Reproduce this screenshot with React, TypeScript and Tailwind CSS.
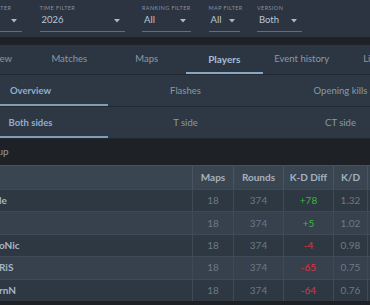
import React from 'react'

type Filter = { label: string; value: string; width: string }

const FILTERS: Filter[] = [
  { label: 'EVENT FILTER', value: 'All', width: 'w-[51px]' },
  { label: 'TIME FILTER', value: '2026', width: 'w-[85px]' },
  { label: 'RANKING FILTER', value: 'All', width: 'w-[49px]' },
  { label: 'MAP FILTER', value: 'All', width: 'w-[31px]' },
  { label: 'VERSION', value: 'Both', width: 'w-[45px]' },
]

const TABS = ['Overview', 'Matches', 'Maps', 'Players', 'Event history', 'Lineups']

const ROWS = [
  { name: 'le', maps: 18, rounds: 374, diff: 78, kd: '1.32' },
  { name: '', maps: 18, rounds: 374, diff: 5, kd: '1.02' },
  { name: 'oNic', maps: 18, rounds: 374, diff: -4, kd: '0.98' },
  { name: 'RiS', maps: 18, rounds: 374, diff: -65, kd: '0.75' },
  { name: 'rnN', maps: 18, rounds: 374, diff: -64, kd: '0.76' },
]

function Arrow() {
  return (
    <svg width="6" height="4" viewBox="0 0 6 4" className="ml-auto mr-[5px]">
      <polygon points="0,0 6,0 3,3.5" fill="#a9b9ca" />
    </svg>
  )
}

function SubTabs({ items, active }: { items: string[]; active: number }) {
  return (
    <div className="flex h-[32px] bg-[#2d3844] border-b border-[#222930]">
      {items.map((label, i) => (
        <div
          key={label}
          className={
            'relative w-[155px] flex items-center justify-center pt-[2px] text-[9.5px] ' +
            (i === active ? 'font-bold text-[#8eafcf]' : 'text-[#8c98a5]')
          }
        >
          {label}
          {i === active && <div className="absolute left-0 right-0 bottom-0 h-[2px] bg-[#7f9cba]" />}
        </div>
      ))}
    </div>
  )
}

export default function App() {
  return (
    <div
      className="w-[370px] h-[305px] overflow-hidden bg-[#1e2227]"
      style={{ fontFamily: 'Lato, "Open Sans", sans-serif' }}
    >
      <div className="w-[465px] -ml-[47px]">
        {/* Filters */}
        <div className="h-[37px] bg-[#2b3440] flex gap-[17.5px] pl-[18px] pt-[4px]">
          {FILTERS.map((f) => (
            <div key={f.label} className={'flex flex-col ' + f.width}>
              <div className="h-[8px] text-[5.5px] leading-[8px] tracking-[0.4px] text-[#8792a0] whitespace-nowrap">
                {f.label}
              </div>
              <div className="h-[20px] pb-[2px] flex items-center border-b border-[#566f8a] pl-[2px] text-[9.5px] text-[#b8c7d8]">
                {f.value}
                <Arrow />
              </div>
            </div>
          ))}
        </div>

        <div className="h-[8px] bg-[#1e2227]" />

        {/* Main tabs */}
        <div className="flex h-[30px] bg-[#2c3642] border-b border-[#222930]">
          {TABS.map((t) => (
            <div
              key={t}
              className={
                'relative w-[77.5px] shrink-0 flex items-center justify-center whitespace-nowrap ' +
                (t === 'Players' ? 'text-[10px] font-bold text-[#a6bdd5]' : 'text-[9.5px] text-[#8c98a5]')
              }
            >
              {t}
              {t === 'Players' && <div className="absolute left-0 right-0 bottom-0 h-[2px] bg-[#8aa6c3]" />}
            </div>
          ))}
        </div>

        <SubTabs items={['Overview', 'Flashes', 'Opening kills']} active={0} />
        <SubTabs items={['Both sides', 'T side', 'CT side']} active={0} />

        {/* Section title */}
        <div className="h-[26px] flex items-center pl-[26px] pb-[1px] text-[10px] text-[#8f9aa6] bg-[#1e2227]">
          Lineup
        </div>

        {/* Table */}
        <div className="text-[10px]">
          <div className="flex h-[24px] bg-[#3a4552] border-t border-[#46515e] font-bold text-[#a7b1bc]">
            <div className="w-[240px] border-r border-[#4a5562]" />
            <div className="w-[41px] flex items-center justify-center border-r border-[#4a5562]">Maps</div>
            <div className="w-[50px] flex items-center justify-center border-r border-[#4a5562]">Rounds</div>
            <div className="w-[50px] flex items-center justify-center border-r border-[#4a5562]">K-D Diff</div>
            <div className="w-[34px] flex items-center justify-center border-r border-[#4a5562]">K/D</div>
            <div className="flex-1" />
          </div>
          {ROWS.map((r, i) => (
            <div
              key={i}
              className={
                'flex h-[22.4px] border-t border-[#3f4a57] ' +
                (i % 2 === 0 ? 'bg-[#2e3843]' : 'bg-[#36414d]')
              }
            >
              <div className="w-[240px] flex items-center pl-[46px] font-bold text-[#a8b5c3] border-r border-[#3f4a57]">
                {r.name}
              </div>
              <div className="w-[41px] flex items-center justify-center text-[#6d7885] border-r border-[#3f4a57]">{r.maps}</div>
              <div className="w-[50px] flex items-center justify-center text-[#6d7885] border-r border-[#3f4a57]">{r.rounds}</div>
              <div
                className={
                  'w-[50px] flex items-center justify-center border-r border-[#3f4a57] ' +
                  (r.diff > 0 ? 'text-[#3fb43f]' : 'text-[#e0333b]')
                }
              >
                {r.diff > 0 ? '+' + r.diff : r.diff}
              </div>
              <div className="w-[34px] flex items-center justify-center text-[#6d7885] border-r border-[#3f4a57]">{r.kd}</div>
              <div className="flex-1" />
            </div>
          ))}
        </div>
      </div>
    </div>
  )
}
